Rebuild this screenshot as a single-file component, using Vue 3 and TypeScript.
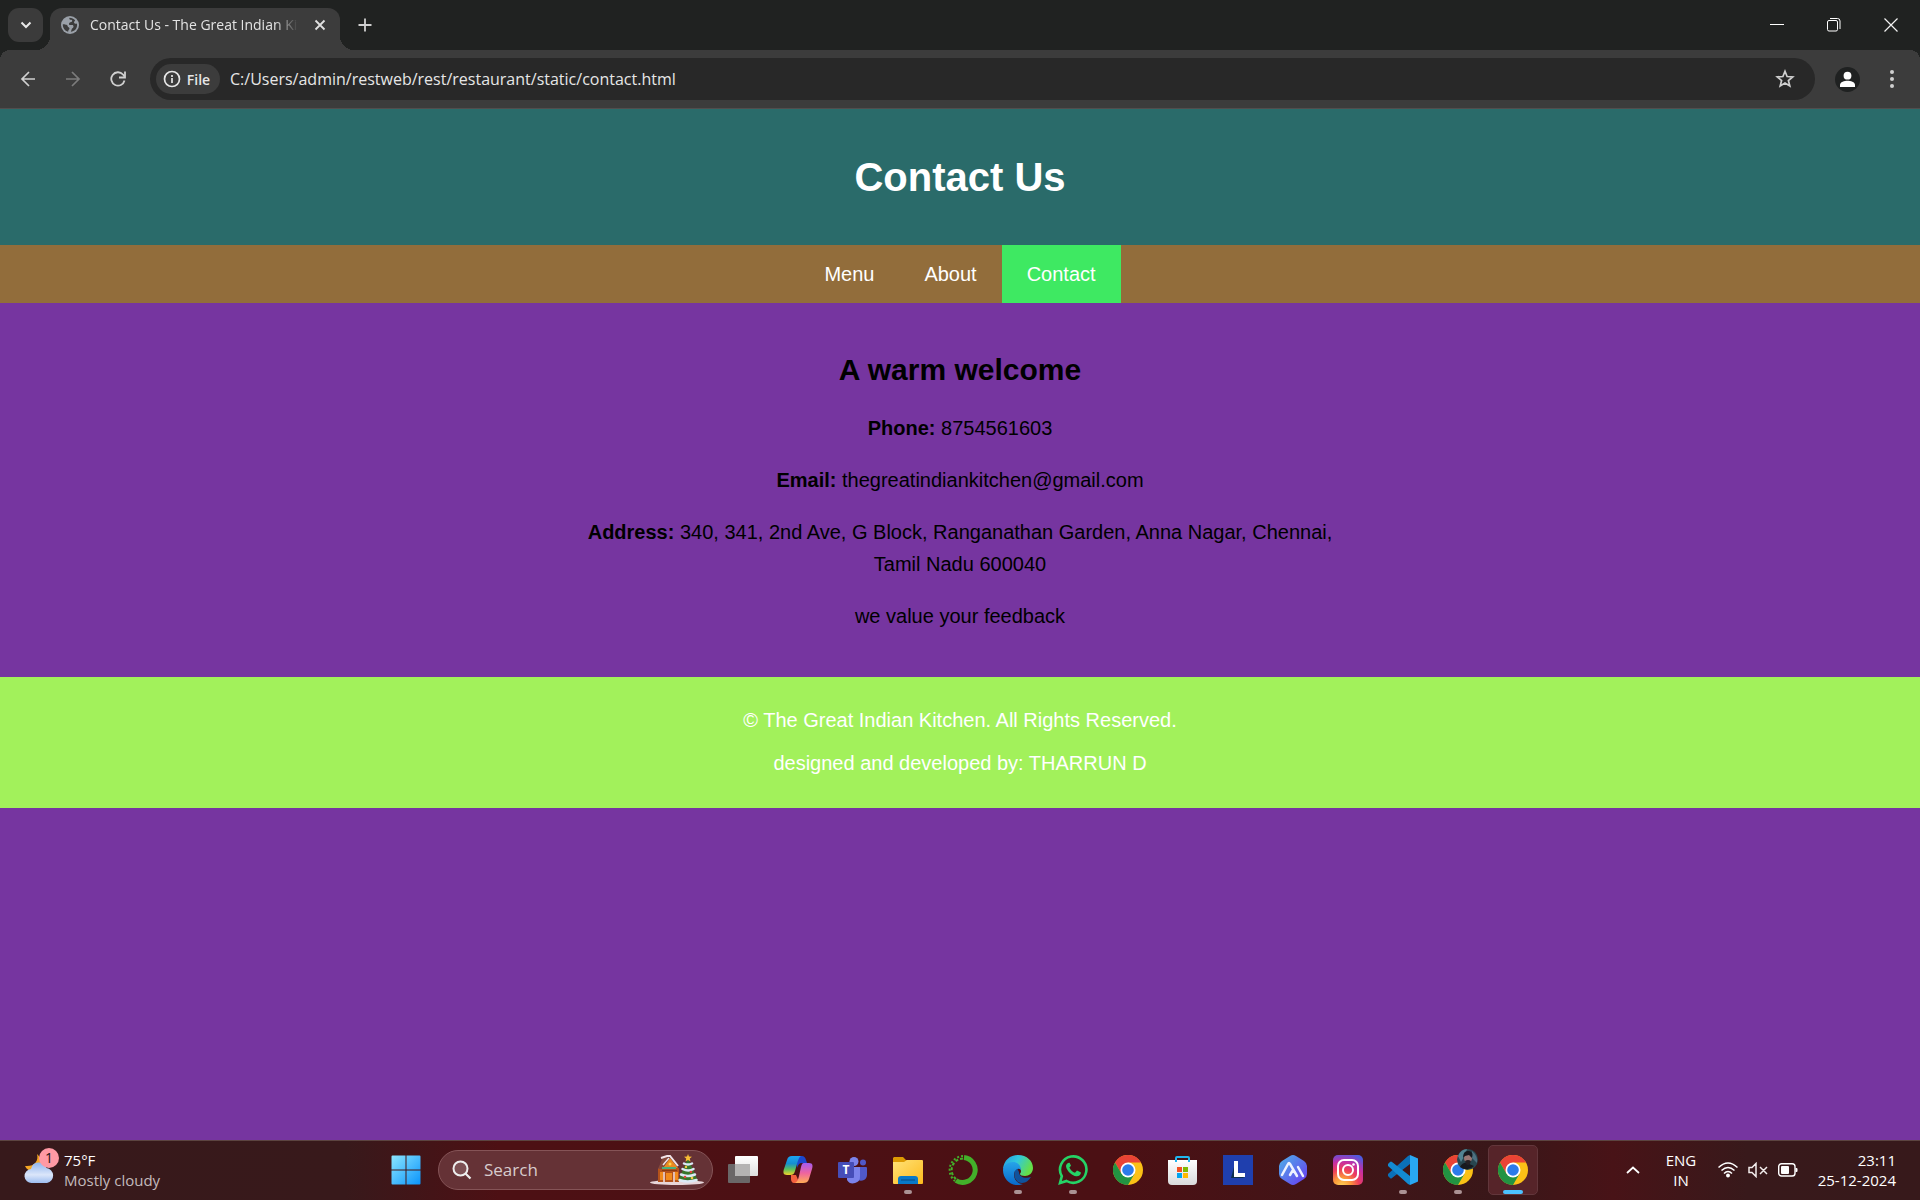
<script setup lang="ts">
import { ref } from 'vue'

interface Link {
  label: string
  href: string
  active?: boolean
}

interface TaskApp {
  id: string
  name: string
  state?: 'open' | 'active'
}

const links: Link[] = [
  { label: 'Menu', href: '#menu' },
  { label: 'About', href: '#about' },
  { label: 'Contact', href: '#contact', active: true },
]

const apps: TaskApp[] = [
  { id: 'taskview', name: 'Task View' },
  { id: 'copilot', name: 'Copilot' },
  { id: 'teams', name: 'Teams' },
  { id: 'explorer', name: 'File Explorer', state: 'open' },
  { id: 'anaconda', name: 'Anaconda' },
  { id: 'edge', name: 'Edge', state: 'open' },
  { id: 'whatsapp', name: 'WhatsApp', state: 'open' },
  { id: 'chrome', name: 'Chrome' },
  { id: 'store', name: 'Store' },
  { id: 'lapp', name: 'L' },
  { id: 'hexapp', name: 'Assistant' },
  { id: 'instagram', name: 'Instagram' },
  { id: 'vscode', name: 'Visual Studio Code', state: 'open' },
  { id: 'chromeprofile', name: 'Chrome profile', state: 'open' },
  { id: 'chrome', name: 'Chrome window', state: 'active' },
]

const address = ref('C:/Users/admin/restweb/rest/restaurant/static/contact.html')
const query = ref('')
</script>

<template>
  <div class="screen">
    <div class="tabstrip">
      <button class="tab-search" aria-label="Search tabs">
        <svg width="12" height="8" viewBox="0 0 12 8"><path d="M1.5 1.5 6 6l4.500-4.500" fill="none" stroke="#e8e8e8" stroke-width="2" /></svg>
      </button>
      <div class="tab">
        <svg class="favicon" width="18" height="18" viewBox="0 0 18 18">
          <circle cx="9" cy="9" r="9" fill="#9aa0a8" />
          <path d="M8.500 1.700c-.6 1.100.2 2 1.600 2.100 1.500.2 1.500 1.700.2 2.200-1.500.5-2.500.8-2.300 2.300.2 1 1.800.8 3.200.7 1.700-.1 1.700 2.700.2 3.200-.8.4-.9 2.200-1.600 3.600 3.600-.4 6.300-3.100 6.300-6.800 0-.5-.1-1-.2-1.500-1.400.7-2.400.3-2.800-.7-.4-1 .7-1.700 1-2.600-1.400-1.600-3.300-2.500-5.600-2.500z" fill="#3c3c3c" />
          <path d="M1.800 8.300c1.900.1 4.700.3 4.900 1.900.1 1.200 1.800.9 1.800 2.200 0 1.100-1.300 1-1.400 3.400-3.200-.9-5.500-4.100-5.300-7.500z" fill="#3c3c3c" />
        </svg>
        <span class="tab-title">Contact Us - The Great Indian Kitchen</span>
        <button class="tab-close" aria-label="Close tab">
          <svg width="12" height="12" viewBox="0 0 12 12"><path d="M1.500 1.500l9 9m0-9l-9 9" stroke="#e0e0e0" stroke-width="1.800" /></svg>
        </button>
      </div>
      <button class="new-tab" aria-label="New tab">
        <svg width="14" height="14" viewBox="0 0 14 14"><path d="M7 .5v13M.5 7h13" stroke="#d0d0d0" stroke-width="1.800" /></svg>
      </button>
      <div class="window-controls">
        <button aria-label="Minimize"><svg width="14" height="14" viewBox="0 0 14 14"><path d="M0 6.500h14" stroke="#fff" /></svg></button>
        <button aria-label="Restore">
          <svg width="14" height="14" viewBox="0 0 14 14" fill="none" stroke="#fff">
            <rect x=".5" y="2.500" width="10" height="10.500" rx="1.500" />
            <path d="M3 .5h7.500a2.500 2.500 0 0 1 2.500 2.500v8" />
          </svg>
        </button>
        <button aria-label="Close"><svg width="14" height="14" viewBox="0 0 14 14"><path d="M.5.500l13 13m0-13l-13 13" stroke="#f2f2f2" stroke-width="1.200" /></svg></button>
      </div>
    </div>

    <div class="toolbar">
      <div class="nav-buttons">
        <button aria-label="Back"><svg width="16" height="16" viewBox="0 0 16 16"><path d="M15 8H2m7-7L2 8l7 7" fill="none" stroke="#d0d0d0" stroke-width="1.700" /></svg></button>
        <button aria-label="Forward"><svg width="16" height="16" viewBox="0 0 16 16"><path d="M1 8h13M7 1l7 7-7 7" fill="none" stroke="#7c7c7c" stroke-width="1.700" /></svg></button>
        <button aria-label="Reload">
          <svg width="16" height="16" viewBox="0 0 16 16">
            <path d="M14.500 9.500A6.700 6.700 0 1 1 13 3.500L14.500 5.500" fill="none" stroke="#d0d0d0" stroke-width="1.800" />
            <path d="M15 .5V6.500H9" fill="none" stroke="#d0d0d0" stroke-width="1.800" />
          </svg>
        </button>
      </div>
      <div class="omnibox">
        <button class="chip">
          <svg width="18" height="18" viewBox="0 0 18 18"><circle cx="9" cy="9" r="7.500" fill="none" stroke="#e6e6e6" stroke-width="1.700" /><path d="M9 8v5M9 5v2" stroke="#e6e6e6" stroke-width="1.700" /></svg>
          <span>File</span>
        </button>
        <input v-model="address" class="url" type="text" aria-label="Address" spellcheck="false" />
        <button class="star" aria-label="Bookmark this page">
          <svg width="20" height="20" viewBox="0 0 20 20"><path d="M10 2.300l2.100 5.200 5.600.4-4.300 3.600 1.400 5.500-4.800-3-4.800 3 1.400-5.500-4.300-3.600 5.600-.4z" fill="none" stroke="#cfcfcf" stroke-width="1.700" /></svg>
        </button>
      </div>
      <button class="profile" aria-label="Profile">
        <svg width="25" height="25" viewBox="0 0 25 25"><circle cx="12.500" cy="12.500" r="12.500" fill="#1f2121" /><circle cx="12.500" cy="8.700" r="3.900" fill="#fff" /><path d="M5 20v-2c0-2.900 4.500-4.200 7.500-4.200s7.500 1.300 7.500 4.200v2z" fill="#fff" /></svg>
      </button>
      <button class="kebab" aria-label="Browser menu">
        <svg width="4" height="18" viewBox="0 0 4 18" fill="#cfcfcf"><circle cx="2" cy="2" r="2" /><circle cx="2" cy="9" r="2" /><circle cx="2" cy="16" r="2" /></svg>
      </button>
    </div>

    <div class="page">
      <header class="page-header"><h1>Contact Us</h1></header>
      <nav class="page-nav">
        <a v-for="link in links" :key="link.label" :href="link.href" :class="{ active: link.active }">{{ link.label }}</a>
      </nav>
      <main class="contact">
        <h2>A warm welcome</h2>
        <p><strong>Phone:</strong> 8754561603</p>
        <p><strong>Email:</strong> thegreatindiankitchen@gmail.com</p>
        <p><strong>Address:</strong> 340, 341, 2nd Ave, G Block, Ranganathan Garden, Anna Nagar, Chennai, Tamil Nadu 600040</p>
        <p>we value your feedback</p>
      </main>
      <footer class="page-footer">
        <p>© The Great Indian Kitchen. All Rights Reserved.</p>
        <p>designed and developed by: THARRUN D</p>
      </footer>
    </div>

    <div class="taskbar">
      <button class="weather">
        <svg width="36" height="38" viewBox="0 0 36 38">
          <defs>
            <linearGradient id="cloud" x1="0" y1="0" x2="0" y2="1"><stop offset="0" stop-color="#8fb4ee" /><stop offset=".6" stop-color="#dbe6fa" /><stop offset="1" stop-color="#9dbdf0" /></linearGradient>
          </defs>
          <path d="M13 7c2 7-3 13-12 12 2 5 8 6 12 4 5-3 6-11 0-16z" fill="#f5a623" />
          <path d="M8 36a7 7 0 0 1-1-14 8 8 0 0 1 15.500-1A7.600 7.600 0 0 1 23 36z" fill="url(#cloud)" />
          <circle cx="25" cy="11" r="10" fill="#ff99a4" />
          <text x="25" y="16" text-anchor="middle" font-size="14" fill="#1c1114">1</text>
        </svg>
        <span class="two-lines"><span>75°F</span><span class="muted">Mostly cloudy</span></span>
      </button>

      <div class="task-center">
        <button class="task-btn start" aria-label="Start">
          <svg width="30" height="30" viewBox="0 0 30 30">
            <defs><linearGradient id="win" x1="0" y1="0" x2="1" y2="1"><stop offset="0" stop-color="#8ce6ff" /><stop offset="1" stop-color="#0a94fb" /></linearGradient></defs>
            <path d="M1.500.500H14.500V14.500H.5V1.500a1 1 0 0 1 1-1zM15.500.500h13a1 1 0 0 1 1 1v13h-14zM.5 15.500h14v14h-13a1 1 0 0 1-1-1zM15.500 15.500h14v13a1 1 0 0 1-1 1h-13z" fill="url(#win)" />
          </svg>
        </button>
        <label class="search">
          <svg width="20" height="20" viewBox="0 0 20 20"><circle cx="8.500" cy="8.500" r="7" fill="#7d5054" stroke="#eee" stroke-width="2" /><path d="M13.500 13.500l5 5" stroke="#eee" stroke-width="2.200" /></svg>
          <input v-model="query" type="text" placeholder="Search" aria-label="Search" />
          <svg width="54" height="32" viewBox="0 0 54 32">
            <ellipse cx="27" cy="28.500" rx="27" ry="2.500" fill="#e8d6da" />
            <path d="M8 14h21v14H8z" fill="#b5531b" />
            <path d="M10 18h3v8h-3zM16 19h6v7h-6zM25 18h3v8h-3z" fill="#f08a1c" />
            <path d="M13 14L20 4l8 10z" fill="#e98a20" />
            <path d="M8 15L13 3h5l-5 12z" fill="#87493b" />
            <path d="M11 4l6-2h3l8 10" fill="none" stroke="#f1e4e8" stroke-width="2" />
            <path d="M13 11L19 4" stroke="#f1e4e8" stroke-width="1.500" />
            <path d="M12 14h14" stroke="#4bb07b" stroke-width="2" />
            <path d="M12 16.500h15" stroke="#8a3c14" />
            <path d="M14 28V18M24 28V18" stroke="#f1e4e8" stroke-width="1.500" />
            <circle cx="20" cy="10" r="1.500" fill="#ffd34d" />
            <path d="M38 4l-10 23h20z" fill="#37762b" />
            <path d="M34 9.500q4 2 8 0M32.500 15q6 3 11 0M31 20.500q7 3 14 0M29.500 26q8 3 17 0" fill="none" stroke="#dce9f6" stroke-width="2.500" stroke-linecap="round" />
            <circle cx="36" cy="13" r="1.200" fill="#f5c842" /><circle cx="41" cy="18" r="1.300" fill="#e0453c" /><circle cx="35" cy="23" r="1.300" fill="#e0453c" /><circle cx="42" cy="24" r="1.300" fill="#f5c842" />
            <path d="M38 0l1 2.500 3 .3-2.200 1.800.7 3L38 6l-2.500 1.600.7-3L34 2.800l3-.3z" fill="#f8bd35" />
          </svg>
        </label>
        <div class="apps">
          <button v-for="app in apps" :key="app.name" class="task-btn" :class="app.state" :aria-label="app.name">
            <svg v-if="app.id === 'taskview'" width="30" height="30" viewBox="0 0 30 30">
              <defs><linearGradient id="tv" x1="0" y1="0" x2="0" y2="1"><stop offset="0" stop-color="#fff" /><stop offset="1" stop-color="#dedede" /></linearGradient></defs>
              <rect x="0" y="9" width="22" height="19" rx="1" fill="#6a6768" /><rect x="7" y="1" width="23" height="20" rx="1" fill="url(#tv)" /><path d="M7 9h15v12H8a1 1 0 0 1-1-1z" fill="#b4b3b3" />
            </svg>
            <svg v-else-if="app.id === 'copilot'" width="30" height="30" viewBox="0 0 30 30">
              <defs>
                <linearGradient id="cp1" x1="0" y1="0" x2="0" y2="1"><stop offset="0" stop-color="#1ba5f4" /><stop offset=".4" stop-color="#168fd0" /><stop offset=".7" stop-color="#5cc05c" /><stop offset="1" stop-color="#f4d22b" /></linearGradient>
                <linearGradient id="cp2" x1="0" y1="0" x2="0" y2="1"><stop offset="0" stop-color="#a45bf0" /><stop offset=".5" stop-color="#ee639f" /><stop offset="1" stop-color="#ffad55" /></linearGradient>
              </defs>
              <path d="M14 1h5c2 0 3 1 4 4l1 3h-5c-3 0-4 2-5 5z" fill="#1b47cf" />
              <path d="M8 20h5l3 7c-1 1-2 1-3 1h-2c-2 0-3-2-3-4z" fill="#f3603f" />
              <path d="M9 1h9c-2 1-3 4-4 8l-2 7c-1 3-2 4-5 4H4c-4 0-4-3-3-6l3-9c1-3 2-4 5-4z" fill="url(#cp1)" />
              <path d="M21 8h5c4 0 4 3 3 6l-3 10c-1 3-3 4-6 4h-8c2-1 3-3 4-7l2-9c1-3 1-4 3-4z" fill="url(#cp2)" />
            </svg>
            <svg v-else-if="app.id === 'teams'" width="30" height="30" viewBox="0 0 30 30">
              <circle cx="16" cy="6.500" r="4.500" fill="#7b83eb" /><circle cx="25" cy="7.500" r="3" fill="#5059c9" />
              <path d="M20 12h8q1 0 1 1v7a6 6 0 0 1-9 5z" fill="#5059c9" /><path d="M9 12h13v9a7 7 0 0 1-13 4z" fill="#7b83eb" />
              <rect x="0" y="7" width="16" height="16" rx="1" fill="#464eb8" /><text x="8" y="19" text-anchor="middle" font-size="12" font-weight="700" fill="#fff">T</text>
            </svg>
            <svg v-else-if="app.id === 'explorer'" width="30" height="30" viewBox="0 0 30 30">
              <defs><linearGradient id="fe" x1="0" y1="0" x2="1" y2="1"><stop offset="0" stop-color="#ffe278" /><stop offset="1" stop-color="#fdba1d" /></linearGradient></defs>
              <path d="M1 2h9l3 3h12v5H0V3z" fill="#dd9a03" /><path d="M0 7h11l3-2h15q1 0 1 1v22q0 1-1 1H1q-1 0-1-1z" fill="url(#fe)" />
              <path d="M5 29v-5q0-3 3-3h14q3 0 3 3v5z" fill="#0879c9" /><path d="M8 25h14" stroke="#064a83" />
            </svg>
            <svg v-else-if="app.id === 'anaconda'" width="30" height="30" viewBox="0 0 30 30" fill="none" stroke="#43b02a">
              <path d="M16 2.500A12.500 12.500 0 1 1 8 25.500" stroke-width="5" />
              <path d="M15 1A14 14 0 0 0 7 26" stroke-width="2" stroke-dasharray="2 2" /><path d="M15 3.500A11.500 11.500 0 0 0 8 24" stroke-width="2" stroke-dasharray="3 2" />
            </svg>
            <svg v-else-if="app.id === 'edge'" width="30" height="30" viewBox="0 0 30 30">
              <defs>
                <linearGradient id="ed1" x1="0" y1="0" x2="1" y2=".4"><stop offset="0" stop-color="#239ae0" /><stop offset=".5" stop-color="#31c8de" /><stop offset="1" stop-color="#65df48" /></linearGradient>
                <linearGradient id="ed2" x1="0" y1="0" x2="0" y2="1"><stop offset="0" stop-color="#27a4e9" /><stop offset="1" stop-color="#0868cb" /></linearGradient>
              </defs>
              <path d="M0 14C1 5 7 0 15 0c9 0 15 6 15 13 0 5-4 8-8 8-3 0-5-1-5-2 0-1 1-1 1-3 0-3-3-6-8-6-5 0-9 2-10 4z" fill="url(#ed1)" />
              <path d="M14 13c-5 4-3 15 5 15 4 0 7-3 9-6-6 2-12 0-12-5z" fill="#10529c" />
              <path d="M0 15C0 10 5 7 10 7s8 4 8 8c-3-3-7 0-7 5 0 5 4 9 9 9-9 4-20-3-20-14z" fill="url(#ed2)" />
            </svg>
            <svg v-else-if="app.id === 'whatsapp'" width="30" height="30" viewBox="0 0 30 30">
              <path d="M2 28l1.800-6.800A13.200 13.200 0 1 1 8.600 26z" fill="none" stroke="#25d366" stroke-width="2.600" />
              <path d="M10 8c-2 1-2.500 3-1.500 5.200 2 4.300 5.800 7.300 9.600 8 2.400.4 4.900-1.200 4.900-3.600l-4-2-2 2.200c-2.600-1-4.500-2.900-5.600-5.300l1.600-1.800L11.600 7.800z" fill="#25d366" />
            </svg>
            <svg v-else-if="app.id === 'store'" width="30" height="30" viewBox="0 0 30 30">
              <defs><linearGradient id="st" x1="0" y1="0" x2="0" y2="1"><stop offset="0" stop-color="#fff" /><stop offset="1" stop-color="#d9dadb" /></linearGradient></defs>
              <path d="M0 5h29v21q0 4-4 4H4q-4 0-4-4z" fill="url(#st)" /><path d="M8 7V3q0-1 1-1h11q1 0 1 1v4" fill="none" stroke="#20b7ef" stroke-width="2" />
              <path d="M9 12h5v5H9z" fill="#f25022" /><path d="M15 12h5v5h-5z" fill="#7fba00" /><path d="M9 18h5v5H9z" fill="#00a4ef" /><path d="M15 18h5v5h-5z" fill="#ffb900" />
            </svg>
            <svg v-else-if="app.id === 'lapp'" width="30" height="30" viewBox="0 0 30 30">
              <rect width="30" height="30" fill="#1f3fae" /><path d="M11 12L8 23h14l-9-4z" fill="#0c2e4d" /><path d="M11 6h4v12h7v4H11z" fill="#fff" />
            </svg>
            <svg v-else-if="app.id === 'hexapp'" width="30" height="30" viewBox="0 0 30 30">
              <defs><linearGradient id="hx" x1="0" y1="0" x2="1" y2="1"><stop offset="0" stop-color="#4db2e7" /><stop offset="1" stop-color="#6938f1" /></linearGradient></defs>
              <path d="M12 1q3-2 6 0l8 5q3 2 3 5v8q0 3-3 5l-8 5q-3 2-6 0l-8-5q-3-2-3-5v-8q0-3 3-5z" fill="url(#hx)" />
              <path d="M4 20l6-11q1-2 2 0l7 12M12 20l3-5M20 12l5 9" fill="none" stroke="#eef2ff" stroke-width="2.500" stroke-linecap="round" />
            </svg>
            <svg v-else-if="app.id === 'instagram'" width="30" height="30" viewBox="0 0 30 30">
              <defs>
                <radialGradient id="ig" cx=".3" cy="1.050" r="1.150"><stop offset="0" stop-color="#ffd65a" /><stop offset=".25" stop-color="#fb9b3a" /><stop offset=".5" stop-color="#ee3d5b" /><stop offset=".72" stop-color="#c52fa5" /><stop offset="1" stop-color="#4c5be0" /></radialGradient>
              </defs>
              <rect width="30" height="30" rx="5" fill="url(#ig)" /><rect x="5" y="5" width="20" height="20" rx="6" fill="none" stroke="#fff" stroke-width="2" /><circle cx="15" cy="15" r="5" fill="none" stroke="#fff" stroke-width="2" /><circle cx="20.500" cy="9.500" r="1.300" fill="#fff" />
            </svg>
            <svg v-else-if="app.id === 'vscode'" width="30" height="30" viewBox="0 0 30 30">
              <path d="M22 0v9L4 23q-1 1-2 0l-2-2q-1-1 0-2L20 1z" fill="#0b70b8" /><path d="M22 30v-9L4 7Q3 6 2 7L0 9q-1 1 0 2l20 18z" fill="#138ad2" /><path d="M22 0l7 3q1 0 1 1v22q0 1-1 1l-7 3z" fill="#29a8f3" />
            </svg>
            <svg v-else width="30" height="30" viewBox="0 0 30 30">
              <circle cx="15" cy="15" r="15" fill="#fbc116" />
              <path d="M2 7.500A15 15 0 0 1 28 7.500H15L8.500 18.800z" fill="#ea4335" />
              <path d="M2 7.500A15 15 0 0 0 15 30l6.500-11.300H8.500z" fill="#229342" />
              <circle cx="15" cy="15" r="7.500" fill="#fff" /><circle cx="15" cy="15" r="5.800" fill="#2c7bea" />
            </svg>
            <svg v-if="app.id === 'chromeprofile'" class="avatar" width="21" height="21" viewBox="0 0 21 21">
              <circle cx="10.500" cy="10.500" r="10.500" fill="#28464f" /><path d="M1 7Q4 0 10 0L8 6 4 13z" fill="#518493" /><path d="M15 2q6 5 5 12l-5-5z" fill="#4d7080" />
              <path d="M3 18q3-5 7-4l7 3q-6 6-14 1z" fill="#17191e" /><ellipse cx="11" cy="9" rx="4" ry="5" fill="#9a7774" /><path d="M6 9q0-8 6-7 5 1 3 7l-3-3-4 1z" fill="#16191f" /><path d="M8 12q3-2 6 0-1 4-3 4t-3-4z" fill="#241f23" />
            </svg>
          </button>
        </div>
      </div>

      <div class="tray">
        <button class="chevron" aria-label="Show hidden icons"><svg width="14" height="8" viewBox="0 0 14 8"><path d="M1 7l6-5.500L13 7" fill="none" stroke="#fff" stroke-width="1.800" /></svg></button>
        <button class="lang two-lines"><span>ENG</span><span>IN</span></button>
        <button class="status" aria-label="Network, sound and battery">
          <svg width="20" height="16" viewBox="0 0 20 16" fill="none" stroke="#fff" stroke-width="1.500"><path d="M.5 5.500Q10-3.500 19.500 5.500M3.500 8.500q6.500-6 13 0M6 11.500q4-4 8 0" /><circle cx="10" cy="13.500" r="1.200" fill="#fff" /></svg>
          <svg width="20" height="16" viewBox="0 0 20 16" fill="none" stroke="#f2ecec" stroke-width="1.500"><path d="M1 5.500h3l4-4v13l-4-4H1zM12 5l7 7m0-7l-7 7" /></svg>
          <svg width="20" height="14" viewBox="0 0 20 14"><rect x=".7" y=".7" width="16.300" height="12.300" rx="2.800" fill="none" stroke="#fff" stroke-width="1.400" /><rect x="3" y="3" width="8" height="8" rx="1" fill="#fff" /><path d="M17.500 5h1q1 0 1 1v2q0 1-1 1h-1z" fill="#fff" /></svg>
        </button>
        <button class="clock two-lines"><span>23:11</span><span>25-12-2024</span></button>
      </div>
    </div>
  </div>
</template>

<style>
body {
  margin: 0;
}
</style>

<style scoped>
.screen {
  display: flex;
  flex-direction: column;
  min-height: 100vh;
  background: #7635a0;
  font-family: "Open Sans", "Noto Sans", sans-serif;
}
.screen * {
  box-sizing: border-box;
}
button,
input {
  margin: 0;
  padding: 0;
  border: 0;
  background: none;
  color: inherit;
  font: inherit;
  outline: none;
}
button {
  display: flex;
  align-items: center;
  justify-content: center;
}
svg {
  display: block;
  flex: none;
}

/* Browser frame */
.tabstrip {
  display: flex;
  height: 50px;
  padding: 8px 1px 0 8px;
  background: #202221;
}
.tab-search {
  width: 35px;
  height: 34px;
  border-radius: 11px;
  background: #3b3b3b;
}
.tab {
  position: relative;
  display: flex;
  align-items: center;
  width: 290px;
  height: 42px;
  margin-left: 7px;
  padding: 0 10px 8px 11px;
  border-radius: 12px 12px 0 0;
  background: #3c3c3c;
}
.tab::before,
.tab::after {
  content: "";
  position: absolute;
  bottom: 0;
  width: 14px;
  height: 14px;
}
.tab::before {
  right: 100%;
  background: radial-gradient(circle at 0 0, transparent 14px, #3c3c3c 14px);
}
.tab::after {
  left: 100%;
  background: radial-gradient(circle at 100% 0, transparent 14px, #3c3c3c 14px);
}
.tab-title {
  flex: 1;
  margin-left: 11px;
  overflow: hidden;
  white-space: nowrap;
  color: #e3e3e3;
  font-size: 14px;
  line-height: 20px;
  mask-image: linear-gradient(90deg, #000 185px, transparent 208px);
}
.tab-close {
  width: 20px;
  height: 20px;
}
.new-tab {
  width: 34px;
  height: 34px;
  margin-left: 8px;
}
.window-controls {
  display: flex;
  margin-left: auto;
}
.window-controls button {
  width: 57px;
  height: 34px;
}
.toolbar {
  display: flex;
  align-items: center;
  height: 59px;
  padding: 0 16px 0 5px;
  border-bottom: 1px solid #514e4e;
  background:
    radial-gradient(circle at 10px 10px, #3c3c3c 10px, #202221 10px) 0 0 / 10px 10px no-repeat,
    radial-gradient(circle at 0 10px, #3c3c3c 10px, #202221 10px) 100% 0 / 10px 10px no-repeat,
    #3c3c3c;
}
.nav-buttons {
  display: flex;
}
.nav-buttons button {
  width: 45px;
  height: 42px;
}
.omnibox {
  display: flex;
  flex: 1;
  align-items: center;
  height: 42px;
  margin-left: 10px;
  padding: 0 20px 0 6px;
  border-radius: 21px;
  background: #282828;
}
.chip {
  gap: 6px;
  width: 64px;
  height: 30px;
  padding-right: 3px;
  border-radius: 15px;
  background: #3c3c3c;
  color: #e6e6e6;
  font-size: 14px;
  font-weight: 600;
}
.url {
  flex: 1;
  height: 30px;
  margin-left: 10px;
  color: #e6e6e6;
  font-size: 16px;
}
.profile {
  margin-left: 20px;
}
.kebab {
  width: 24px;
  height: 30px;
  margin-left: 20px;
}

/* Restaurant page */
.page {
  flex: 1;
  background: #7635a0;
  color: #000;
  font-family: "Liberation Sans", Arial, sans-serif;
  font-size: 20px;
  line-height: 32px;
  text-align: center;
}
.page-header {
  padding: 45px 25px;
  background: #2a6b6a;
  color: #fff;
}
h1 {
  margin: 0;
  font-size: 40px;
  line-height: 46px;
}
.page-nav {
  display: flex;
  justify-content: center;
  background: #926d3b;
}
.page-nav a {
  padding: 13px 25px;
  color: #fff;
  text-decoration: none;
}
.page-nav a.active {
  background: #3ee962;
}
.contact {
  max-width: 800px;
  margin: 0 auto;
  padding: 50px 25px 45px;
}
h2 {
  margin: 0 0 25px;
  font-size: 30px;
  line-height: 34px;
}
p {
  margin: 0;
}
p + p {
  margin-top: 20px;
}
.page-footer {
  padding: 32px 25px 33px;
  background: #a2f15b;
  color: #fff;
  line-height: 23px;
}

/* Taskbar */
.taskbar {
  display: grid;
  grid-template-columns: 1fr auto 1fr;
  height: 60px;
  padding-bottom: 1px;
  border-top: 1px solid #5c4440;
  background: linear-gradient(90deg, #37191b 0, #38191b 18%, #4d1014 26%, #4b1014 58%, #431417 68%, #391719 78%, #481317 84%, #38191b 91%, #37191b 100%);
  color: #fff;
  font-size: 15px;
  line-height: 20px;
}
.two-lines {
  display: flex;
  flex-direction: column;
  align-items: flex-start;
}
.muted {
  color: #c3babb;
}
.weather {
  justify-self: start;
  align-items: center;
  gap: 4px;
  padding-left: 24px;
}
.weather > svg {
  align-self: flex-start;
  margin-top: 6px;
}
.task-center {
  display: flex;
  align-items: center;
}
.task-btn {
  position: relative;
  width: 55px;
  height: 58px;
}
.task-btn.start {
  width: 54px;
}
.search {
  display: flex;
  align-items: center;
  width: 275px;
  height: 40px;
  margin: 0 2px 0 5px;
  padding: 0 8px 0 13px;
  border: 1px solid #855457;
  border-radius: 20px;
  background: #653236;
}
.search input {
  flex: 1;
  min-width: 0;
  margin-left: 12px;
  font-size: 17px;
}
.search input::placeholder {
  color: #d8cccd;
  opacity: 1;
}
.apps {
  display: flex;
  margin-right: 1px;
}
.open::after,
.active.task-btn::after {
  content: "";
  position: absolute;
  bottom: 5px;
  left: 50%;
  width: 8px;
  height: 4px;
  margin-left: -4px;
  border-radius: 2px;
  background: #ab9294;
}
.active.task-btn::after {
  width: 20px;
  margin-left: -10px;
  background: #4cc2ff;
}
.active.task-btn::before {
  content: "";
  position: absolute;
  inset: 4px 2px 4px 3px;
  border: 1px solid #62363b;
  border-radius: 5px;
  background: #562429;
}
.active.task-btn > svg {
  position: relative;
}
.avatar {
  position: absolute;
  top: 8px;
  right: 7px;
}
.tray {
  display: flex;
  align-items: center;
  justify-self: end;
  padding-right: 24px;
}
.chevron {
  width: 30px;
  height: 40px;
}
.lang {
  align-items: center;
  width: 36px;
  margin-left: 15px;
}
.status {
  gap: 10px;
  margin-left: 19px;
}
.clock {
  align-items: flex-end;
  width: 80px;
  margin-left: 18px;
}
</style>
